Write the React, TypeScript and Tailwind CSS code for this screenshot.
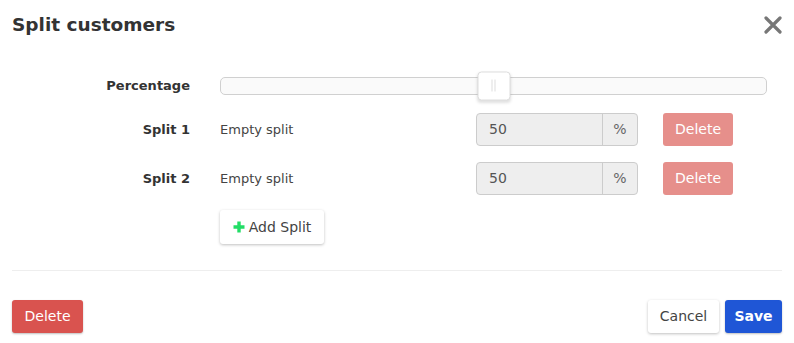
import React from "react";

const font = { fontFamily: '"DejaVu Sans", "Open Sans", sans-serif' };

function SplitRow({ label, value }: { label: string; value: number }) {
  return (
    <>
      <div className="flex h-[33px] items-center justify-end text-[13px] font-bold text-[#333]">
        {label}
      </div>
      <div className="flex h-[33px] items-center">
        <div className="w-[256px] text-[13px] text-[#444]">Empty split</div>
        <div className="flex h-[33px] w-[162px] rounded-[4px] border border-[#ccc] bg-[#eee]">
          <div className="flex flex-1 items-center pl-[12px] text-[14px] text-[#555]">{value}</div>
          <div className="flex w-[35px] items-center justify-center border-l border-[#ccc] text-[14px] text-[#666]">
            %
          </div>
        </div>
        <button className="ml-[25px] h-[33px] w-[70px] rounded-[3px] bg-[#e68f8b] text-[14px] font-medium text-white">
          Delete
        </button>
      </div>
    </>
  );
}

export default function App() {
  return (
    <div className="flex h-[343px] w-[794px] flex-col bg-white" style={font}>
      <header className="flex items-center justify-between px-[12px] pt-[12px]">
        <h1 className="text-[18.5px] font-bold leading-[26px] text-[#333]">Split customers</h1>
        <svg width="18" height="18" viewBox="0 0 18 18">
          <path d="M2 2L16 16M16 2L2 16" stroke="#777" strokeWidth="3.2" strokeLinecap="round" />
        </svg>
      </header>

      <div className="mt-[33px] grid grid-cols-[178px_1fr] gap-x-[30px] px-[12px]">
        <div className="flex h-[29px] items-center justify-end text-[13px] font-bold text-[#333]">
          Percentage
        </div>
        <div className="flex h-[29px] items-center">
          <div className="relative h-[18px] w-[547px] rounded-[5px] border border-[#d0d0d0] bg-[#fafafa]">
            <div className="absolute left-1/2 top-1/2 flex h-[29px] w-[33px] -translate-x-1/2 -translate-y-1/2 items-center justify-center gap-[2px] rounded-[4px] border border-[#ddd] bg-white shadow-[0_2px_3px_rgba(0,0,0,0.12)]">
              <span className="h-[12px] w-px bg-[#ddd]" />
              <span className="h-[12px] w-px bg-[#ddd]" />
            </div>
          </div>
        </div>

        <div className="col-span-2 h-[13px]" />
        <SplitRow label="Split 1" value={50} />
        <div className="col-span-2 h-[16px]" />
        <SplitRow label="Split 2" value={50} />
        <div className="col-span-2 h-[15px]" />

        <div />
        <div>
          <button className="flex h-[34px] w-[104px] items-center justify-center gap-[4px] rounded-[3px] bg-white text-[14px] text-[#444] shadow-[0_1px_3px_rgba(0,0,0,0.25)]">
            <svg width="12" height="12" viewBox="0 0 12 12">
              <path d="M6 0.5V11.5M0.5 6H11.5" stroke="#22dd66" strokeWidth="3.4" />
            </svg>
            Add Split
          </button>
        </div>
      </div>

      <div className="mx-[12px] mt-[26px] h-px bg-[#eee]" />

      <footer className="mt-[29px] flex items-center justify-between px-[12px]">
        <button className="h-[33px] w-[71px] rounded-[3px] bg-[#d9534f] text-[14px] font-medium text-white shadow-[0_1px_2px_rgba(0,0,0,0.25)]">
          Delete
        </button>
        <div className="flex gap-[6px]">
          <button className="h-[33px] w-[71px] rounded-[3px] bg-white text-[14px] text-[#444] shadow-[0_1px_3px_rgba(0,0,0,0.25)]">
            Cancel
          </button>
          <button className="h-[33px] w-[57px] rounded-[3px] bg-[#1f56d6] text-[14px] font-semibold text-white shadow-[0_1px_2px_rgba(0,0,0,0.25)]">
            Save
          </button>
        </div>
      </footer>
    </div>
  );
}
